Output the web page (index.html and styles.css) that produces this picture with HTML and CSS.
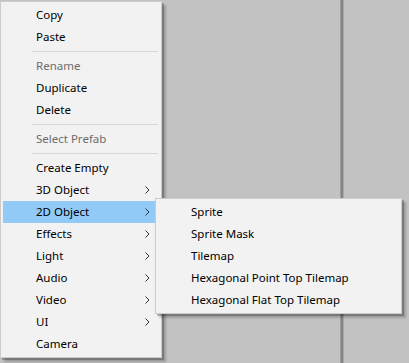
FILE: index.html
```html
<!DOCTYPE html>
<html lang="en">

<head>
    <meta charset="UTF-8">
    <title>Hierarchy Context Menu</title>
    <link rel="stylesheet" href="styles.css">
</head>

<body>
    <div class="editor">
        <div class="panel"></div>
        <div class="splitter"></div>
        <div class="panel panel-right"></div>
    </div>

    <!-- Main context menu -->
    <ul class="menu main-menu">
        <li class="item">Copy</li>
        <li class="item">Paste</li>
        <li class="sep"></li>
        <li class="item disabled">Rename</li>
        <li class="item">Duplicate</li>
        <li class="item">Delete</li>
        <li class="sep"></li>
        <li class="item disabled">Select Prefab</li>
        <li class="sep"></li>
        <li class="item">Create Empty</li>
        <li class="item has-sub">3D Object
            <svg class="arrow" width="5" height="8" viewBox="0 0 5 8"><path d="M0.5 0.5 L4 4 L0.5 7.5" /></svg>
        </li>
        <li class="item has-sub active">2D Object
            <svg class="arrow" width="5" height="8" viewBox="0 0 5 8"><path d="M0.5 0.5 L4 4 L0.5 7.5" /></svg>
        </li>
        <li class="item has-sub">Effects
            <svg class="arrow" width="5" height="8" viewBox="0 0 5 8"><path d="M0.5 0.5 L4 4 L0.5 7.5" /></svg>
        </li>
        <li class="item has-sub">Light
            <svg class="arrow" width="5" height="8" viewBox="0 0 5 8"><path d="M0.5 0.5 L4 4 L0.5 7.5" /></svg>
        </li>
        <li class="item has-sub">Audio
            <svg class="arrow" width="5" height="8" viewBox="0 0 5 8"><path d="M0.5 0.5 L4 4 L0.5 7.5" /></svg>
        </li>
        <li class="item has-sub">Video
            <svg class="arrow" width="5" height="8" viewBox="0 0 5 8"><path d="M0.5 0.5 L4 4 L0.5 7.5" /></svg>
        </li>
        <li class="item has-sub">UI
            <svg class="arrow" width="5" height="8" viewBox="0 0 5 8"><path d="M0.5 0.5 L4 4 L0.5 7.5" /></svg>
        </li>
        <li class="item">Camera</li>
    </ul>

    <!-- 2D Object submenu -->
    <ul class="menu sub-menu">
        <li class="item">Sprite</li>
        <li class="item">Sprite Mask</li>
        <li class="item">Tilemap</li>
        <li class="item">Hexagonal Point Top Tilemap</li>
        <li class="item">Hexagonal Flat Top Tilemap</li>
    </ul>
</body>

</html>
```

FILE: styles.css
```css
body {
    margin: 0;
    background-color: #c2c2c2;
    font-family: 'Segoe UI', 'Noto Sans', sans-serif;
    font-size: 11.5px;
    overflow: hidden;
}

.editor {
    display: flex;
    height: 363px;
}

.panel {
    width: 340px;
    background-color: #c2c2c2;
}

.panel-right {
    flex: 1;
}

.splitter {
    width: 2px;
    background-color: #858585;
    border-left: 1px solid #9d9d9d;
    border-right: 1px solid #a9a9a9;
}

/* menus */
.menu {
    position: absolute;
    list-style: none;
    margin: 0;
    padding: 2px;
    background-color: #f2f2f2;
    border: 1px solid #cccccc;
    box-shadow: 2px 2px 0 rgba(0, 0, 0, 0.22), 4px 4px 2px rgba(0, 0, 0, 0.2);
}

.main-menu {
    left: 0;
    top: 1px;
    width: 156px;
}

.sub-menu {
    left: 155px;
    top: 198px;
    width: 241px;
}

.item {
    position: relative;
    height: 22px;
    line-height: 22px;
    padding-left: 33px;
    color: #000;
    white-space: nowrap;
}

.item.disabled {
    color: #6d6d6d;
}

.item.active {
    background-color: #91c9f7;
}

.sep {
    height: 1px;
    margin: 3px 1px 3px 29px;
    background-color: #d7d7d7;
}

.arrow {
    position: absolute;
    right: 9px;
    top: 7px;
}

.arrow path {
    fill: none;
    stroke: #333;
    stroke-width: 1;
}
```
